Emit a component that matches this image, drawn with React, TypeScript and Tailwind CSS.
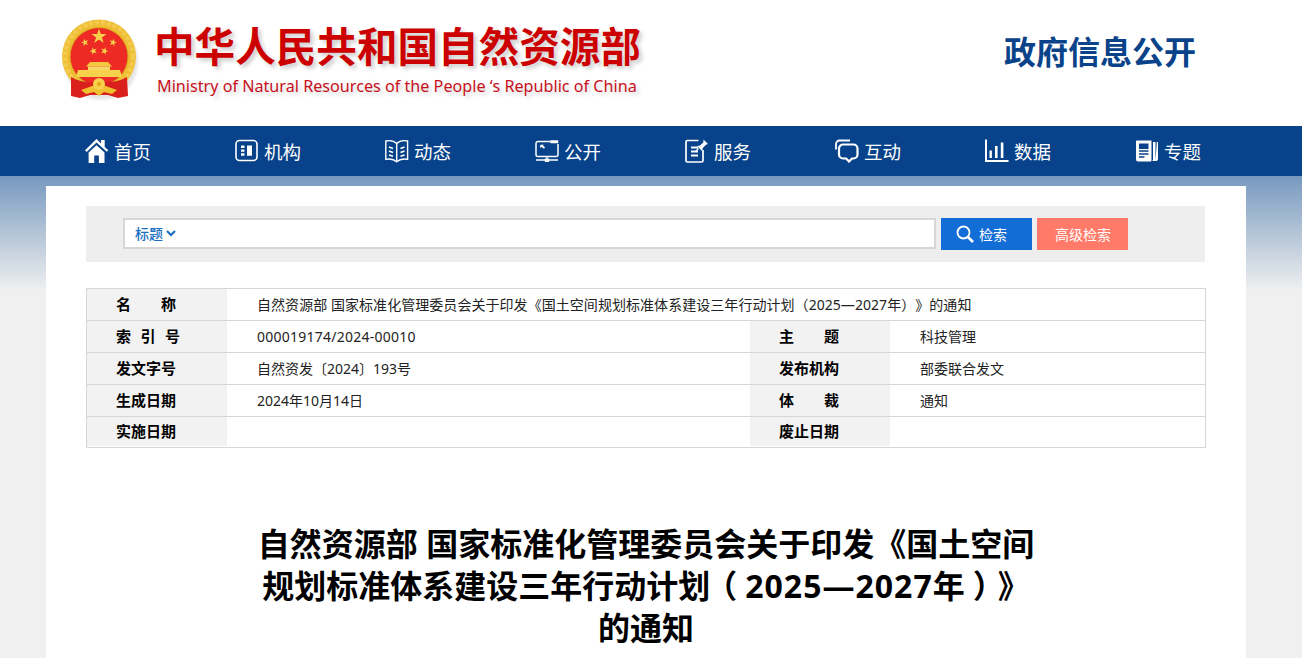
const FONT = "font-['Noto_Sans_CJK_SC','Noto_Sans',sans-serif]";
const LATIN_FIRST = "font-['Noto_Sans','Noto_Sans_CJK_SC',sans-serif]";

function Star({ x, y, r, rot = 0 }: { x: number; y: number; r: number; rot?: number }) {
    const pts: string[] = [];
    for (let i = 0; i < 10; i++) {
        const rad = i % 2 === 0 ? r : r * 0.38;
        const a = ((i * 36 + rot - 90) * Math.PI) / 180;
        pts.push(`${(x + rad * Math.cos(a)).toFixed(2)},${(y + rad * Math.sin(a)).toFixed(2)}`);
    }
    return <polygon points={pts.join(' ')} fill="#f6d24c" />;
}

function Emblem() {
    return (
        <svg width="80" height="88" viewBox="60 15 80 88" className="shrink-0">
            <defs>
                <filter id="soft" x="-20%" y="-20%" width="140%" height="140%">
                    <feGaussianBlur stdDeviation="1.6" />
                </filter>
            </defs>
            <ellipse cx="101" cy="62" rx="37" ry="38" fill="#000" opacity="0.1" filter="url(#soft)" />
            <circle cx="99" cy="56.500" r="37" fill="#efbe35" />
            <circle cx="99" cy="56.500" r="34" fill="none" stroke="#f9dc6c" strokeWidth="4" strokeDasharray="4 2" opacity="0.45" />
            <circle cx="99" cy="56.500" r="29.500" fill="#d9a81f" />
            <circle cx="99" cy="56.500" r="28.500" fill="#ee2a24" />
            <Star x={99} y={36.500} r={8} />
            <Star x={85} y={42.500} r={4} rot={-15} />
            <Star x={113} y={42.500} r={4} rot={15} />
            <Star x={93.500} y={51} r={4} rot={-20} />
            <Star x={104.500} y={51} r={4} rot={20} />
            {/* gate */}
            <path d="M86 66.500 90 62H108L112 66.500z" fill="#f4c93f" />
            <rect x="88" y="66.500" width="22" height="3.500" fill="#f6d765" />
            <path d="M76 77 78 70H120L122 77z" fill="#f6d24c" />
            {/* ribbons */}
            <path d="M71 77C78 81 84 82 90 82H108C114 82 120 81 127 77L128 96 118 98 108 95H90L80 98 71 96z" fill="#d9201c" />
            <path d="M81 90 95 85H103L117 90 112 94 104 92 99 96 94 92 86 94z" fill="#f0c030" />
            <circle cx="99" cy="84" r="6" fill="#f6d24c" />
            <circle cx="99" cy="84" r="2.200" fill="#e4a91e" />
        </svg>
    );
}

const icons = {
    home: (
        <svg width="24" height="24" viewBox="0 0 24 24" fill="#fff">
            <path d="M0 11.200 11.500 0 16 4.400V1h3.700v7l3.600 3.200-1.500 1.600L11.500 3.400 1.600 12.900z" />
            <path d="M3.600 13.600 11.500 6.200l8 7.400V24h-5.600v-7.600H9.200V24H3.600z" />
        </svg>
    ),
    org: (
        <svg width="24" height="24" viewBox="0 0 24 24" fill="none">
            <rect x="1" y="1.500" width="21" height="20" rx="3.500" stroke="#fff" strokeWidth="1.600" />
            <path d="M6 6.500h3.500v2.400H6zM6 10.400h3.500v2.400H6zM6 14.300h3.500v2.400H6zM12 6.500h5v10.200h-5z" fill="#fff" />
        </svg>
    ),
    news: (
        <svg width="24" height="24" viewBox="0 0 24 24" fill="none" stroke="#fff" strokeWidth="1.400">
            <path d="M11.700 4.500C9 1.800 4.500 1.200.8 2v18.400c3.700-.7 8-.2 10.900 2.400 2.900-2.600 7.200-3.100 10.900-2.400V2c-3.700-.8-8.200-.2-10.900 2.500z" />
            <path d="M11.700 4.500v18" />
            <path d="m4 8 4 1.500M4 12l4 1.500M4 16l4 1.200M19.500 8l-4 1.500M19.500 12l-4 1.500M19.500 16l-4 1.200" strokeWidth="1.600" />
        </svg>
    ),
    open: (
        <svg width="24" height="24" viewBox="0 0 24 24" fill="none" stroke="#fff" strokeWidth="1.500">
            <path d="M15 2.500H3A2 2 0 0 0 1 4.500v11a2 2 0 0 0 2 2h18a2 2 0 0 0 2-2V5" />
            <path d="M15.500 1.500h7.500v2.500h-7.500z" fill="#fff" strokeWidth="0.500" />
            <path d="m6 6.500 3.500 2.500" strokeWidth="1.800" />
            <path d="M5.500 6h3l-3 2.500z" fill="#fff" strokeWidth="0.500" />
            <path d="M12 17.500v3M1 21h22" strokeWidth="1.300" />
            <rect x="9.800" y="19.500" width="4.400" height="3.500" fill="#fff" stroke="none" />
        </svg>
    ),
    service: (
        <svg width="24" height="24" viewBox="0 0 24 24" fill="none" stroke="#fff" strokeWidth="1.700">
            <path d="M13.500 1.500H2.500a1.500 1.500 0 0 0-1.500 1.500v18.500A1.500 1.500 0 0 0 2.500 23h14a1.500 1.500 0 0 0 1.500-1.500V11" />
            <path d="M6 8.500h7M6 12.500h7M6 16.500h7" strokeWidth="1.800" />
            <path d="m18.500.5 4.500 4.500-2 .8-3 3-1 3.200-4.800-4.800 3.200-1 3-3z" fill="#fff" stroke="none" />
            <path d="m13.500 9.500-2.500 2.500" strokeWidth="1.300" />
        </svg>
    ),
    chat: (
        <svg width="24" height="24" viewBox="0 0 24 24" fill="none" stroke="#fff" strokeWidth="1.800">
            <path d="M1 10.500V5a3.500 3.500 0 0 1 3.500-3.500H15" />
            <path d="M8 5.500h10.500A4 4 0 0 1 22.500 9.500v6a4 4 0 0 1-4 4H17l-3 3-2.800-3H8a4 4 0 0 1-4-4v-6a4 4 0 0 1 4-4z" strokeWidth="2.200" />
        </svg>
    ),
    data: (
        <svg width="24" height="24" viewBox="0 0 24 24" fill="#fff">
            <path d="M0 .5h2V21h21.500v2H0z" />
            <path d="M4.500 11.500h2.400V19H4.500zM10 7h2.600v12H10zM15.800 3.500h2.600V19h-2.600z" />
        </svg>
    ),
    topic: (
        <svg width="24" height="24" viewBox="0 0 24 24" fill="none">
            <path d="M1.500 1.500h15v20a1 1 0 0 1-1 1H3a2 2 0 0 1-2-2V2z" fill="#fff" />
            <path d="M18 3h2.500v19H17c1-.5 1-1 1-2zM21.800 3H23v17a2 2 0 0 1-2 2h-.5z" fill="#fff" />
            <path d="M4 12h9.500M4 15h9.500M4 18h5.500" stroke="#07428a" strokeWidth="1.400" />
            <path d="M4 4.500h9.500v5.500H4z" fill="#07428a" />
        </svg>
    ),
};

const navItems = [
    { label: '首页', icon: icons.home },
    { label: '机构', icon: icons.org },
    { label: '动态', icon: icons.news },
    { label: '公开', icon: icons.open },
    { label: '服务', icon: icons.service },
    { label: '互动', icon: icons.chat },
    { label: '数据', icon: icons.data },
    { label: '专题', icon: icons.topic },
];

function Label({ text, wide }: { text: string; wide?: boolean }) {
    return (
        <div className="w-[140px] shrink-0 self-stretch bg-[#f2f2f2] pl-[29px] flex items-center">
            <span className={`${wide ? 'w-[64px]' : 'w-[60px]'} text-[15px] font-bold text-black [text-align-last:justify] whitespace-nowrap`}>
                {text}
            </span>
        </div>
    );
}

function Value({ text, className }: { text: string; className?: string }) {
    return <div className={`pl-[30px] text-[14px] text-[#222] whitespace-nowrap ${LATIN_FIRST} ${className ?? ''}`}>{text}</div>;
}

const rows = [
    ['索 引 号', '000019174/2024-00010', '主 题', '科技管理'],
    ['发文字号', '自然资发〔2024〕193号', '发布机构', '部委联合发文'],
    ['生成日期', '2024年10月14日', '体 裁', '通知'],
    ['实施日期', '', '废止日期', ''],
];

export default function App() {
    return (
        <div className={`h-[658px] overflow-hidden bg-[#f0f0f0] [text-spacing-trim:space-all] ${FONT}`}>
            {/* Header */}
            <header className="h-[126px] bg-white flex items-start justify-between pl-[60px] pr-[106px]">
                <div className="flex items-start pt-[15px]">
                    <Emblem />
                    <div className="ml-[14px] mt-[2px]">
                        <div className="text-[40.600px] leading-[56px] font-bold text-[#cc0000] whitespace-nowrap [text-shadow:3px_3px_4px_rgba(0,0,0,0.2)]">
                            中华人民共和国自然资源部
                        </div>
                        <div className="mt-[1px] ml-[3px] text-[16.170px] leading-[24px] text-[#c8101c] whitespace-nowrap font-['Noto_Sans',sans-serif] [text-shadow:3px_3px_4px_rgba(0,0,0,0.18)]">
                            Ministry of Natural Resources of the People ʻs Republic of China
                        </div>
                    </div>
                </div>
                <div className="mt-[27px] text-[32px] leading-[46px] font-bold text-[#0a4389]">政府信息公开</div>
            </header>

            {/* Nav */}
            <nav className="h-[50px] bg-[#07428a] flex items-center pl-[85px]">
                {navItems.map((item) => (
                    <div key={item.label} className="w-[150px] flex items-center gap-[5px]">
                        {item.icon}
                        <span className="text-[18.500px] leading-[24px] text-white">{item.label}</span>
                    </div>
                ))}
            </nav>

            <main className="bg-[linear-gradient(#7799bf,#f0f0f0_115px)] bg-no-repeat pt-[10px]">
                <div className="w-[1200px] ml-[46px] bg-white pt-[20px] px-[40px] h-[480px]">
                    {/* Search */}
                    <div className="h-[56px] w-[1119px] bg-[#eeeeee] pl-[37px] pt-[12px] flex items-start">
                        <div className="w-[813px] h-[31px] bg-white border-2 border-[#d6d6d6] flex items-center pl-[10px] gap-[3px]">
                            <span className="text-[14px] font-medium text-[#1c6fc0]">标题</span>
                            <svg width="10" height="7" viewBox="0 0 10 7" fill="none" stroke="#1c6fc0" strokeWidth="2.200">
                                <path d="m1 1 4 4 4-4" />
                            </svg>
                        </div>
                        <button className="ml-[5px] w-[91px] h-[32px] bg-[#136dd6] flex items-center pl-[15px] gap-[5px] text-[14px] text-white">
                            <svg width="18" height="18" viewBox="0 0 18 18" fill="none" stroke="#fff">
                                <circle cx="7.500" cy="7.500" r="6" strokeWidth="1.800" />
                                <path d="m12 12 5 5" strokeWidth="2.600" />
                            </svg>
                            检索
                        </button>
                        <button className="ml-[5px] w-[91px] h-[32px] bg-[#ff7a69] pl-[1px] text-[14px] text-white">高级检索</button>
                    </div>

                    {/* Info table */}
                    <div className="mt-[26px] w-[1120px] border border-[#d6d6d6] text-black">
                        <div className="h-[32px] flex items-center border-b border-[#d6d6d6]">
                            <Label text="名 称" />
                            <Value
                                text="自然资源部 国家标准化管理委员会关于印发《国土空间规划标准体系建设三年行动计划（2025—2027年）》的通知"
                                className="tracking-[0.05px]"
                            />
                        </div>
                        {rows.map((row, index) => (
                            <div
                                key={row[0]}
                                className={`flex items-center ${index === rows.length - 1 ? 'h-[30px] pb-[1px]' : 'h-[32px] border-b border-[#d6d6d6]'}`}
                            >
                                <Label text={row[0]} wide={index === 0} />
                                <Value text={row[1]} className={index === 0 ? 'w-[523px] tracking-[0.25px]' : 'w-[523px]'} />
                                <Label text={row[2]} />
                                <Value text={row[3]} />
                            </div>
                        ))}
                    </div>

                    {/* Title */}
                    <h1 className={`mt-[75px] mx-auto w-[800px] text-center text-[32px] leading-[42px] font-bold text-black ${LATIN_FIRST}`}>
                        自然资源部 国家标准化管理委员会关于印发《国土空间
                        <br />
                        规划标准体系建设三年行动计划
                        {/* brackets sit centred in their box in the original font */}
                        <span className="-ml-[5px] mr-[8px]">（</span>
                        <span className="tracking-[1px]">2025—2027</span>年
                        <span className="ml-[8px] -mr-[7px]">）</span>》
                        <br />
                        的通知
                    </h1>
                </div>
            </main>
        </div>
    );
}
